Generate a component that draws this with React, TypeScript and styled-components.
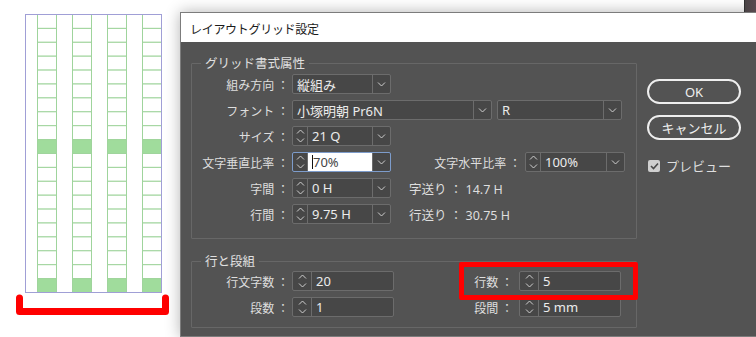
import React from "react";
import styled, { createGlobalStyle } from "styled-components";

const GlobalStyle = createGlobalStyle`
  html, body {
    margin: 0;
    padding: 0;
    background: #ffffff;
  }
  body {
    width: 756px;
    height: 337px;
    overflow: hidden;
    font-family: "Noto Sans", "Noto Sans CJK JP", sans-serif;
  }
`;

const Page = styled.div`
  position: relative;
  display: flex;
  width: 756px;
  height: 337px;
  overflow: hidden;
  background: #ffffff;
`;

// the edge of another window peeking out behind the dialog
const BackWindow = styled.div`
  position: absolute;
  top: 0;
  right: 0;
  width: 12px;
  height: 12px;
  background: linear-gradient(90deg, #2f2f2f 0 1px, #4a4446 1px, #5a4a50);
`;

const Preview = styled.div`
  width: 180px;
  flex: none;
  background: #ffffff;
`;

const Dialog = styled.div`
  flex: none;
  width: 600px;
  margin-top: 12px;
  display: flex;
  flex-direction: column;
  border: 1px solid #7c7c7c;
  box-shadow: 0 0 14px rgba(0, 0, 0, 0.3);
`;

const TitleBar = styled.div`
  height: 29px;
  background: #ffffff;
  display: flex;
  align-items: center;
  padding: 2px 0 0 9px;
  box-sizing: border-box;
  font-family: "Noto Sans CJK JP", sans-serif;
  font-size: 12px;
  color: #1b1b1b;
  letter-spacing: -0.3px;
`;

const Body = styled.div`
  flex: 1;
  background: #535353;
  display: flex;
  gap: 10px;
  padding: 13px 0 0 10px;
  height: 300px;
`;

const Main = styled.div`
  width: 446px;
  display: flex;
  flex-direction: column;
  gap: 14px;
`;

const Group = styled.fieldset<{ $pt: number; $pb: number }>`
  margin: 0;
  padding: ${(p) => p.$pt}px 0 ${(p) => p.$pb}px 0;
  border: 1px solid #676767;
  border-radius: 1px;
  display: flex;
  flex-direction: column;
  gap: 6px;
  min-width: 0;
`;

const Legend = styled.legend`
  margin-left: 9px;
  padding: 0 4px;
  font-family: "Noto Sans CJK JP", sans-serif;
  font-size: 12.5px;
  line-height: 16px;
  color: #e0e0e0;
`;

const Row = styled.div`
  display: flex;
  align-items: center;
  height: 20px;
`;

const Label = styled.span<{ $w: number }>`
  width: ${(p) => p.$w}px;
  flex: none;
  text-align: right;
  font-family: "Noto Sans CJK JP", sans-serif;
  font-size: 12px;
  color: #dedede;
  white-space: nowrap;
  margin-right: 3px;
`;

const Info = styled.span`
  margin-left: 18px;
  font-family: "Noto Sans", "Noto Sans CJK JP", sans-serif;
  font-size: 12.5px;
  color: #dedede;
  white-space: nowrap;
`;

const Combo = styled.div<{ $w: number; $focus?: boolean; $ml?: number }>`
  width: ${(p) => p.$w}px;
  margin-left: ${(p) => p.$ml ?? 0}px;
  height: 20px;
  box-sizing: border-box;
  flex: none;
  display: flex;
  border: 1px solid ${(p) => (p.$focus ? "#7d9ccb" : "#6c6c6c")};
  border-radius: 2px;
  background: #474747;
  overflow: hidden;
`;

const Spin = styled.div<{ $w: number }>`
  width: ${(p) => p.$w}px;
  flex: none;
  border-right: 1px solid #6c6c6c;
  display: flex;
  flex-direction: column;
  align-items: center;
  justify-content: center;
  gap: 4px;
`;

const Field = styled.div<{ $focus?: boolean }>`
  flex: 1;
  display: flex;
  align-items: center;
  padding-left: 4px;
  background: ${(p) => (p.$focus ? "#ffffff" : "transparent")};
  color: ${(p) => (p.$focus ? "#444444" : "#ececec")};
  font-family: "Noto Sans", "Noto Sans CJK JP", sans-serif;
  font-size: 13px;
  white-space: nowrap;
  overflow: hidden;
`;

const Caret = styled.span`
  width: 1px;
  height: 14px;
  background: #111;
`;

const Drop = styled.div`
  width: 17px;
  flex: none;
  border-left: 1px solid #6c6c6c;
  display: flex;
  align-items: center;
  justify-content: center;
`;

const Side = styled.div`
  display: flex;
  flex-direction: column;
  padding-top: 24px;
  width: 94px;
`;

const Button = styled.div<{ $mt: number }>`
  margin-top: ${(p) => p.$mt}px;
  height: 25px;
  box-sizing: border-box;
  border: 2px solid #eeeeee;
  border-radius: 13px;
  display: flex;
  align-items: center;
  justify-content: center;
  font-family: "Noto Sans", "Noto Sans CJK JP", sans-serif;
  font-size: 13px;
  color: #efefef;
`;

const Check = styled.div`
  margin-top: 16px;
  display: flex;
  align-items: center;
  gap: 6px;
  font-family: "Noto Sans CJK JP", sans-serif;
  font-size: 13px;
  color: #dedede;
`;

const Box = styled.span`
  width: 12px;
  height: 12px;
  border-radius: 2px;
  background: #cfcfcf;
  display: flex;
  align-items: center;
  justify-content: center;
  margin-left: 1px;
`;

const Cell = styled.div`
  position: relative;
  display: flex;
  align-items: center;
`;

const Highlight = styled.div`
  position: absolute;
  top: -9px;
  bottom: -9px;
  left: 65px;
  right: -17px;
  border: 5px solid #ff0000;
  border-radius: 2px;
  z-index: 2;
  pointer-events: none;
`;

const Chevron = ({ up }: { up?: boolean }) => (
  <svg width="9" height="5" viewBox="0 0 9 5">
    <path
      d={up ? "M1 4.5 L4.5 1 L8 4.5" : "M1 0.5 L4.5 4 L8 0.5"}
      fill="none"
      stroke="#cfcfcf"
      strokeWidth="1"
    />
  </svg>
);

const Select = ({ w, text, ml }: { w: number; text: string; ml?: number }) => (
  <Combo $w={w} $ml={ml}>
    <Field>{text}</Field>
    <Drop>
      <Chevron />
    </Drop>
  </Combo>
);

const SpinCombo = ({
  w,
  text,
  focus,
  ml,
}: {
  w: number;
  text: string;
  focus?: boolean;
  ml?: number;
}) => (
  <Combo $w={w} $focus={focus} $ml={ml}>
    <Spin $w={14}>
      <Chevron up />
      <Chevron />
    </Spin>
    <Field $focus={focus}>
      {focus && <Caret />}
      {text}
    </Field>
    <Drop>
      <Chevron />
    </Drop>
  </Combo>
);

const NumField = ({ text, ml }: { text: string; ml?: number }) => (
  <Combo $w={102} $ml={ml}>
    <Spin $w={18}>
      <Chevron up />
      <Chevron />
    </Spin>
    <Field>{text}</Field>
  </Combo>
);

const GridPreview = () => {
  const cols = [37, 72, 107, 142];
  const rowH = 278 / 20;
  return (
    <svg width="180" height="337" viewBox="0 0 180 337">
      {cols.map((x) => (
        <g key={x}>
          {Array.from({ length: 20 }).map((_, i) => (
            <rect
              key={i}
              x={x + 0.5}
              y={14.5 + i * rowH}
              width={19}
              height={rowH}
              fill={i === 9 || i === 19 ? "#a0dc9c" : "#ffffff"}
              stroke="#9fd49c"
              strokeWidth="1"
            />
          ))}
        </g>
      ))}
      <rect x="25.5" y="14.5" width="136" height="278" fill="none" stroke="#a09fd6" strokeWidth="1" />
      <path
        d="M19.5 298 V311.5 H165.5 V298"
        fill="none"
        stroke="#ff0000"
        strokeWidth="7"
        strokeLinecap="round"
        strokeLinejoin="round"
      />
    </svg>
  );
};

export default function App() {
  return (
    <>
      <GlobalStyle />
      <Page>
        <BackWindow />
        <Preview>
          <GridPreview />
        </Preview>
        <Dialog>
          <TitleBar>レイアウトグリッド設定</TitleBar>
          <Body>
            <Main>
              <Group $pt={3} $pb={14}>
                <Legend>グリッド書式属性</Legend>
                <Row>
                  <Label $w={97}>組み方向 ：</Label>
                  <Select w={99} text="縦組み" />
                </Row>
                <Row>
                  <Label $w={97}>フォント ：</Label>
                  <Select w={200} text="小塚明朝 Pr6N" />
                  <Select w={125} text="R" ml={5} />
                </Row>
                <Row>
                  <Label $w={97}>サイズ ：</Label>
                  <SpinCombo w={99} text="21 Q" />
                </Row>
                <Row>
                  <Label $w={97}>文字垂直比率 ：</Label>
                  <SpinCombo w={99} text="70%" focus />
                  <Label $w={130}>文字水平比率 ：</Label>
                  <SpinCombo w={100} text="100%" ml={1} />
                </Row>
                <Row>
                  <Label $w={97}>字間 ：</Label>
                  <SpinCombo w={99} text="0 H" />
                  <Info>字送り ： 14.7 H</Info>
                </Row>
                <Row>
                  <Label $w={97}>行間 ：</Label>
                  <SpinCombo w={99} text="9.75 H" />
                  <Info>行送り ： 30.75 H</Info>
                </Row>
              </Group>
              <Group $pt={2} $pb={10}>
                <Legend>行と段組</Legend>
                <Row>
                  <Label $w={97}>行文字数 ：</Label>
                  <NumField text="20" />
                  <Cell>
                    <Label $w={119}>行数 ：</Label>
                    <NumField text="5" ml={3} />
                    <Highlight />
                  </Cell>
                </Row>
                <Row>
                  <Label $w={97}>段数 ：</Label>
                  <NumField text="1" />
                  <Cell>
                    <Label $w={119}>段間 ：</Label>
                    <NumField text="5 mm" ml={3} />
                  </Cell>
                </Row>
              </Group>
            </Main>
            <Side>
              <Button $mt={0}>OK</Button>
              <Button $mt={11}>キャンセル</Button>
              <Check>
                <Box>
                  <svg width="9" height="8" viewBox="0 0 9 8">
                    <path d="M1 4 L3.5 6.5 L8 1.5" fill="none" stroke="#4a4a4a" strokeWidth="1.6" />
                  </svg>
                </Box>
                プレビュー
              </Check>
            </Side>
          </Body>
        </Dialog>
      </Page>
    </>
  );
}
